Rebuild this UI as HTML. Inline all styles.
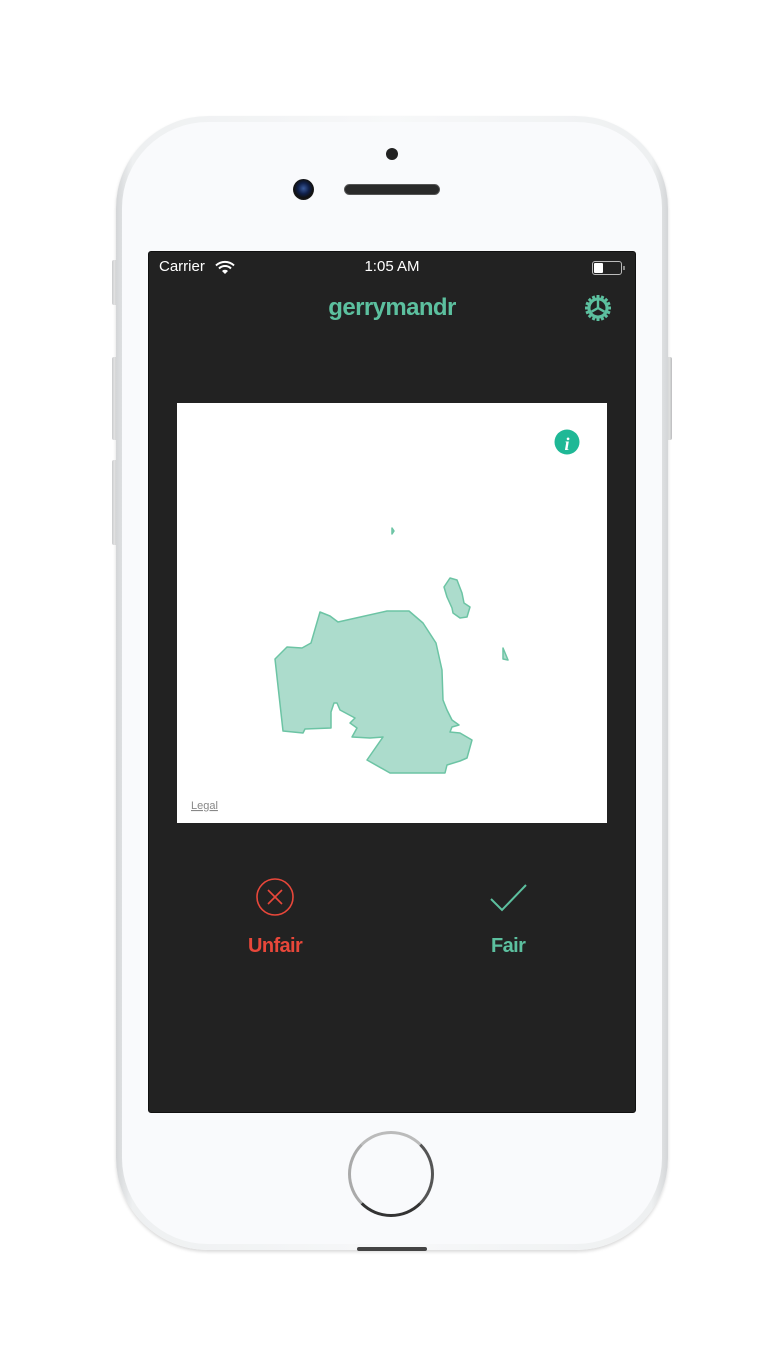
<!DOCTYPE html>
<html><head><meta charset="utf-8"><style>
*{margin:0;padding:0;box-sizing:border-box}
body{width:784px;height:1365px;background:#fff;position:relative;overflow:hidden;font-family:"Liberation Sans",sans-serif}
.abs{position:absolute}
.phone{left:116px;top:116px;width:552px;height:1134px;border-radius:92px;background:linear-gradient(90deg,#d4d6d8,#eef0f1 3%,#f7f8f9 50%,#eef0f1 97%,#d4d6d8);box-shadow:0 2px 3px rgba(0,0,0,.15)}
.inner{left:122px;top:122px;width:540px;height:1122px;border-radius:86px;background:#f9fafc}
.btn{background:linear-gradient(90deg,#c8c9cb,#eceded,#b9babc);border-radius:2px;width:6px}
.screen{left:148px;top:251px;width:488px;height:862px;background:#222;border-radius:3px;border:1px solid #111}
.t{color:#fff;font-size:15px;top:258px}
.title{left:0;width:784px;text-align:center;top:294px;font-size:24px;font-weight:bold;color:#5cc09f;font-family:"Liberation Sans",sans-serif;letter-spacing:-0.6px}
.map{left:177px;top:403px;width:430px;height:420px;background:#fff}
.lbl{font-weight:bold;font-size:20px;font-family:"Liberation Sans",sans-serif;top:935px;letter-spacing:-0.6px}
</style></head><body>
<div class="abs btn" style="left:112px;top:260px;height:45px"></div>
<div class="abs btn" style="left:112px;top:357px;height:83px"></div>
<div class="abs btn" style="left:112px;top:460px;height:85px"></div>
<div class="abs btn" style="left:666px;top:357px;height:83px"></div>
<div class="abs phone"></div>
<div class="abs inner"></div>
<div class="abs" style="left:386px;top:148px;width:12px;height:12px;border-radius:50%;background:#222"></div>
<div class="abs" style="left:293px;top:179px;width:21px;height:21px;border-radius:50%;background:radial-gradient(circle at 50% 45%,#3a5a9a 0,#10204a 35%,#111 60%,#333 100%)"></div>
<div class="abs" style="left:344px;top:184px;width:96px;height:11px;border-radius:6px;background:#2a2a2a;border:1px solid #555"></div>
<div class="abs" style="left:348px;top:1131px;width:86px;height:86px;border-radius:50%;border:3px solid #999;border-color:#bbb #555 #333 #aaa"></div>
<div class="abs" style="left:357px;top:1247px;width:70px;height:4px;border-radius:2px;background:#444"></div>
<div class="abs screen"></div>
<div class="abs t" style="left:159px">Carrier</div>
<svg class="abs" style="left:215px;top:260px" width="20" height="15" viewBox="0 0 20 15"><path d="M1 5.5a13 13 0 0 1 18 0" stroke="#fff" stroke-width="2" fill="none"/><path d="M4 8.5a8.5 8.5 0 0 1 12 0" stroke="#fff" stroke-width="2" fill="none"/><path d="M10 14l-3-3a4.3 4.3 0 0 1 6 0z" fill="#fff"/></svg>
<div class="abs t" style="left:0;width:784px;text-align:center">1:05 AM</div>
<div class="abs" style="left:592px;top:261px;width:30px;height:14px;border:1px solid #bbb;border-radius:3px"></div>
<div class="abs" style="left:594px;top:263px;width:9px;height:10px;background:#fff;border-radius:1px"></div>
<div class="abs" style="left:623px;top:266px;width:2px;height:4px;background:#888"></div>
<div class="abs title">gerrymandr</div>
<svg class="abs" style="left:584px;top:294px" width="28" height="28" viewBox="0 0 28 28"><g fill="#5cc09f"><circle cx="14" cy="14" r="10.5"/><g><rect x="12.5" y="1" width="3" height="4"/><rect x="12.5" y="23" width="3" height="4"/><rect x="1" y="12.5" width="4" height="3"/><rect x="23" y="12.5" width="4" height="3"/><g transform="rotate(45 14 14)"><rect x="12.5" y="1" width="3" height="4"/><rect x="12.5" y="23" width="3" height="4"/><rect x="1" y="12.5" width="4" height="3"/><rect x="23" y="12.5" width="4" height="3"/></g><g transform="rotate(22.5 14 14)"><rect x="12.5" y="1" width="3" height="4"/><rect x="12.5" y="23" width="3" height="4"/><rect x="1" y="12.5" width="4" height="3"/><rect x="23" y="12.5" width="4" height="3"/><g transform="rotate(45 14 14)"><rect x="12.5" y="1" width="3" height="4"/><rect x="12.5" y="23" width="3" height="4"/><rect x="1" y="12.5" width="4" height="3"/><rect x="23" y="12.5" width="4" height="3"/></g></g></g></g><circle cx="14" cy="14" r="7.5" fill="#222"/><path d="M14 14V6.5M14 14l-6.5 3.7M14 14l6.5 3.7" stroke="#5cc09f" stroke-width="2.4"/></svg>
<div class="abs map"></div>
<svg class="abs" style="left:0;top:0" width="784" height="1365"><g fill="#acdccc" stroke="#6cc4a4" stroke-width="1.5" stroke-linejoin="round">
<path d="M275 659L287 647L302 648L311 643L320 612L330 616L338 622L387 611L409 611L423 623L436 643L442 670L443 700L447 710L452 720L459 725L452 727L450 732L460 733L472 740L467 758L460 761L447 765L445 773L390 773L367 760L383 737L370 738L352 737L357 728L350 723L355 718L340 710L337 703L334 703L331 712L331 728L305 729L303 733L293 732L283 731Z"/>
<path d="M444 587L450 578L457 580L462 593L464 603L470 607L467 617L460 618L453 613L452 608L447 597Z"/>
<path d="M503 648L508 660L503 659Z"/>
<path d="M392 528L394 531L392 534Z"/></g>
<circle cx="567" cy="442" r="12.5" fill="#1fb896"/>
<text x="567" y="450" text-anchor="middle" font-family="Liberation Serif,serif" font-style="italic" font-weight="bold" font-size="18" fill="#fff">i</text>
<text x="191" y="809" font-family="Liberation Sans,sans-serif" font-size="11" fill="#888" text-decoration="underline">Legal</text>
<circle cx="275" cy="897" r="18" fill="none" stroke="#e8473a" stroke-width="1.6"/>
<path d="M268 890L282 904M282 890L268 904" stroke="#e8473a" stroke-width="1.6"/>
<path d="M491 899L502 910L526 885" fill="none" stroke="#5cc09f" stroke-width="2"/>
</svg>
<div class="abs lbl" style="left:248px;color:#e8473a">Unfair</div>
<div class="abs lbl" style="left:491px;color:#5cc09f">Fair</div>
</body></html>
